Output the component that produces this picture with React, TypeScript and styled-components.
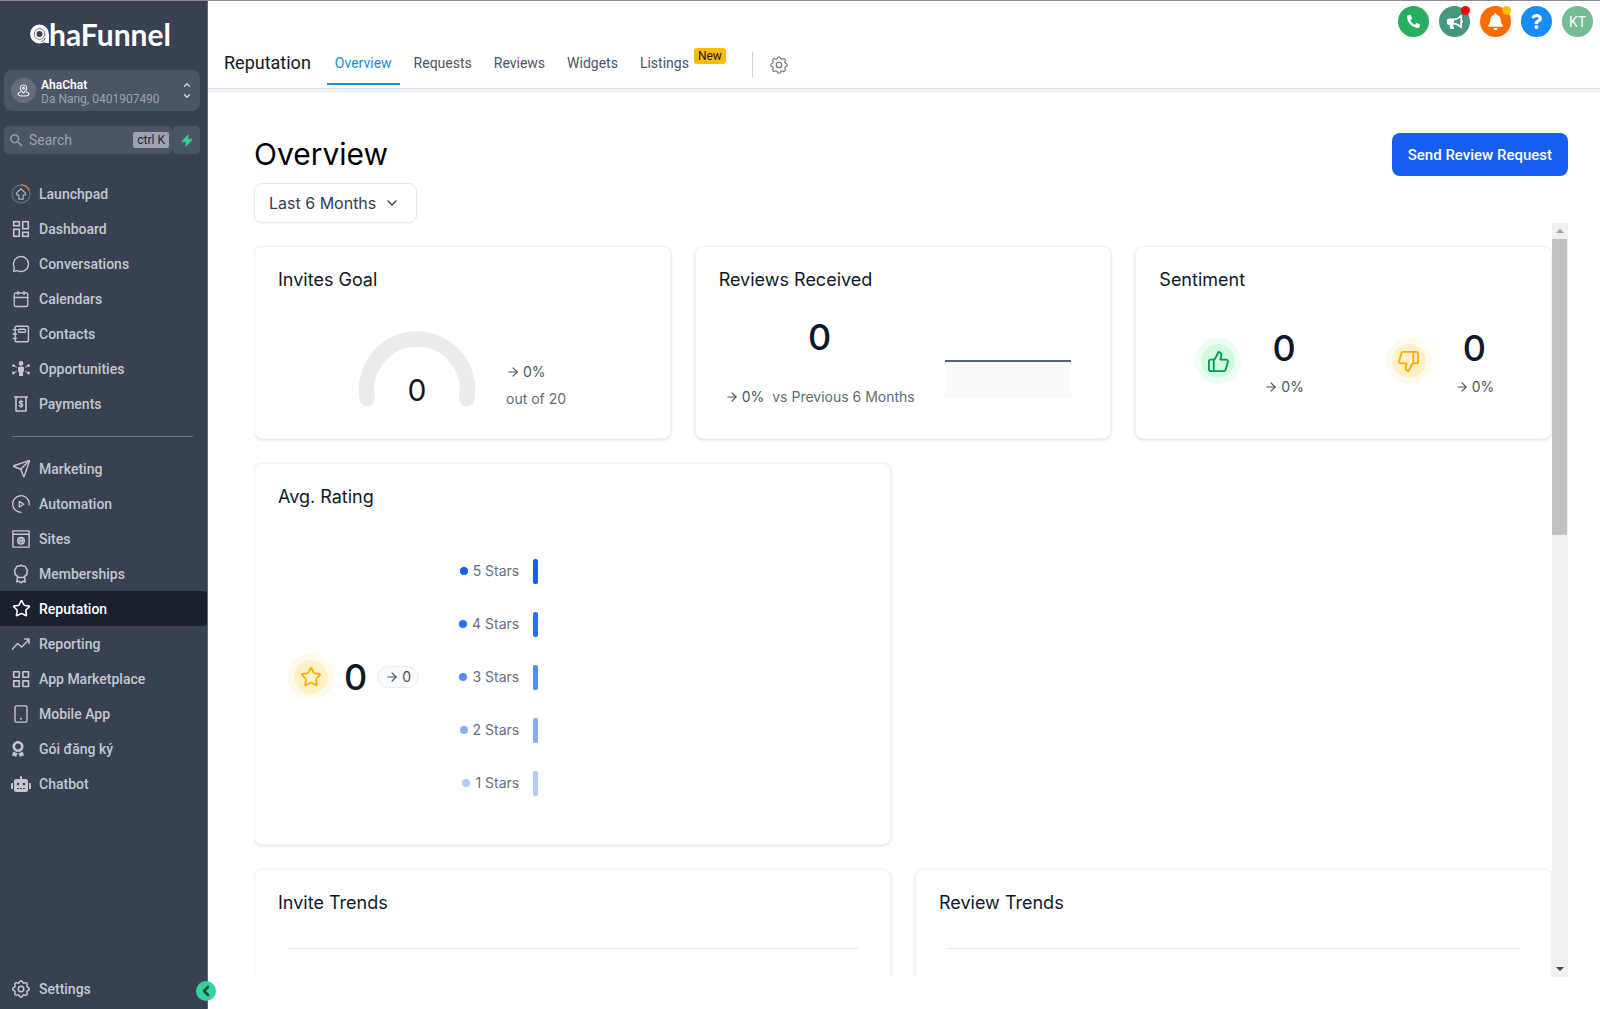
import React, { useRef } from "react";
import styled, { createGlobalStyle } from "styled-components";
import {
  ArrowRight,
  Calendar,
  ChevronDown,
  ChevronUp,
  ChevronLeft,
  MessageCircle,
  Send,
  Star,
  ThumbsDown,
  ThumbsUp,
} from "lucide-react";
import { FaAward, FaBell, FaBullhorn, FaPhoneAlt, FaQuestion, FaRobot } from "react-icons/fa";
import { HiOutlineCog } from "react-icons/hi";
import { MdSearch } from "react-icons/md";

const roboto = `Roboto, "Liberation Sans", sans-serif`;
const inter = `Inter, "Liberation Sans", sans-serif`;

const GlobalStyle = createGlobalStyle`
  *, *::before, *::after { box-sizing: border-box; }
  body { margin: 0; background: #fff; font-family: ${roboto}; }
  button, input, select { font: inherit; color: inherit; }
  h1, h2, p, ul, dl, dd, dt { margin: 0; padding: 0; font-weight: 400; }
  svg { display: block; flex: none; }
`;

const Shell = styled.div`
  display: flex;
  height: 100vh;
  border-top: 1px solid #8a8c90;
`;

/* ---------- sidebar ---------- */

const Sidebar = styled.aside`
  position: relative;
  display: flex;
  flex-direction: column;
  flex: none;
  width: 208px;
  background: #374151;
  border-right: 1px solid #5d6a7d;
  color: #c4c8ce;
`;

const Brand = styled.a`
  display: flex;
  align-items: center;
  height: 65px;
  margin-bottom: 4px;
  padding-left: 30px;
  color: #fff;
  text-decoration: none;
  font: 700 30px/32px Lato, ${roboto};
`;

const Account = styled.button`
  display: flex;
  align-items: center;
  gap: 5px;
  height: 41px;
  margin: 0 7px 0 4px;
  padding: 0 8px 0 7px;
  border: 0;
  border-radius: 8px;
  background: #4b5563;
  text-align: left;
`;

const AccountAvatar = styled.span`
  display: grid;
  place-items: center;
  width: 25px;
  height: 25px;
  border-radius: 50%;
  background: #656d7a;
  color: #e5e7eb;
`;

const AccountText = styled.span`
  flex: 1;
  display: flex;
  flex-direction: column;
  padding-top: 2px;
  font-size: 12px;
  line-height: 14px;
  color: #9da4ae;
`;

const AccountName = styled.strong`
  font-weight: 600;
  color: #fff;
`;

const Sorter = styled.span`
  display: flex;
  flex-direction: column;
  gap: 1px;
  color: #d1d5db;
`;

const SearchRow = styled.div`
  display: flex;
  margin: 15px 7px 0 4px;
`;

const SearchBox = styled.label`
  flex: 1;
  display: flex;
  align-items: center;
  gap: 4px;
  min-width: 0;
  height: 28px;
  padding: 0 3px 0 4px;
  border-radius: 5px;
  background: #4b5563;
  color: #9ca3af;
`;

const SearchInput = styled.input`
  flex: 1;
  min-width: 0;
  padding: 0;
  border: 0;
  outline: 0;
  background: transparent;
  font-size: 14px;
  line-height: 20px;
  &::placeholder {
    color: #9ca3af;
    opacity: 1;
  }
`;

const Shortcut = styled.kbd`
  padding: 0 4px;
  border-radius: 2px;
  background: #9ca3af;
  color: #1f2937;
  font: 400 12px/16px ${roboto};
`;

const QuickButton = styled.button`
  display: grid;
  place-items: center;
  width: 28px;
  height: 28px;
  padding: 0;
  border: 0;
  border-left: 1px solid #434d5c;
  border-radius: 5px;
  background: #4b5563;
  color: #34d399;
`;

const Nav = styled.nav`
  flex: 1;
  display: flex;
  flex-direction: column;
  padding-top: 22px;
`;

const Divider = styled.hr`
  width: calc(100% - 26px);
  margin: 15px 0 14px 12px;
  border: 0;
  border-top: 1px solid #6f7987;
`;

const NavLink = styled.a<{ $active?: boolean }>`
  display: flex;
  align-items: center;
  gap: 9px;
  height: 35px;
  padding-left: 12px;
  border-radius: 0 4px 4px 0;
  background: ${(p) => (p.$active ? "#1a202c" : "transparent")};
  color: ${(p) => (p.$active ? "#fff" : "#c4c8ce")};
  font-weight: 500;
  font-size: 14px;
  line-height: 20px;
  text-decoration: none;
`;

const NavIcon = styled.span<{ $narrow?: boolean }>`
  display: flex;
  align-items: center;
  justify-content: ${(p) => (p.$narrow ? "flex-start" : "center")};
  width: 18px;
  height: 20px;
  & > svg {
    ${(p) => (p.$narrow ? "width: 12px;" : "")}
  }
`;

const SidebarFoot = styled.div`
  padding-bottom: 3px;
`;

const Collapse = styled.button`
  position: absolute;
  right: -9px;
  bottom: 8px;
  display: grid;
  place-items: center;
  width: 20px;
  height: 20px;
  padding: 0;
  border: 0;
  border-radius: 50%;
  background: #34d399;
  color: #14532d;
`;

/* ---------- header ---------- */

const Page = styled.div`
  flex: 1;
  min-width: 0;
  display: flex;
  flex-direction: column;
`;

const Header = styled.header`
  display: flex;
  justify-content: space-between;
  height: 88px;
  flex: none;
  padding: 0 7px 0 16px;
  border-bottom: 1px solid #d9dfe4;
  box-shadow: 0 4px 0 #f0f4f8;
`;

const TabBar = styled.div`
  display: flex;
  align-self: flex-end;
  align-items: center;
  height: 47px;
`;

const Section = styled.p`
  margin-right: 16px;
  padding-bottom: 4px;
  font-size: 18px;
  line-height: 24px;
  color: #111827;
`;

const Tabs = styled.nav`
  display: flex;
  gap: 6px;
  height: 47px;
`;

const Tab = styled.a<{ $active?: boolean }>`
  display: flex;
  align-items: center;
  gap: 5px;
  height: 44px;
  padding: 2px 8px 0;
  border-bottom: 2px solid ${(p) => (p.$active ? "#158fd6" : "transparent")};
  color: ${(p) => (p.$active ? "#158fd6" : "#4b5563")};
  font-weight: 400;
  font-size: 14px;
  line-height: 20px;
  text-decoration: none;
`;

const NewBadge = styled.span`
  align-self: flex-start;
  margin-top: 5px;
  padding: 0 4px;
  border-radius: 3px;
  background: #fbbc04;
  color: #111827;
  font-size: 12px;
  line-height: 16px;
`;

const TabRule = styled.span`
  width: 1px;
  height: 26px;
  margin: 0 15px 0 18px;
  background: #cfd3d8;
`;

const IconButton = styled.button`
  padding: 0;
  border: 0;
  background: none;
  color: #6b7280;
`;

const Actions = styled.div`
  display: flex;
  gap: 10px;
  padding-top: 5px;
`;

const Round = styled.button<{ $bg: string }>`
  position: relative;
  display: grid;
  place-items: center;
  width: 31px;
  height: 31px;
  padding: 0;
  border: 0;
  border-radius: 50%;
  background: ${(p) => p.$bg};
  color: #fff;
  font-size: 14px;
`;

const Dot = styled.span<{ $color: string }>`
  position: absolute;
  top: 0;
  right: 0;
  width: 9px;
  height: 9px;
  border-radius: 50%;
  background: ${(p) => p.$color};
`;

/* ---------- overview ---------- */

const Main = styled.main`
  flex: 1;
  min-height: 0;
  display: flex;
  flex-direction: column;
  padding: 44px 32px 32px 46px;
  font-family: ${inter};
`;

const TitleRow = styled.div`
  display: flex;
  align-items: center;
  justify-content: space-between;
  height: 43px;
`;

const Title = styled.h1`
  padding-bottom: 2px;
  font-size: 30px;
  line-height: 38px;
  color: #000;
`;

const Primary = styled.button`
  height: 43px;
  padding: 0 16px;
  border: 0;
  border-radius: 8px;
  background: #155eef;
  color: #fff;
  font: 500 15px/24px ${roboto};
`;

const RangePicker = styled.label`
  display: grid;
  grid-template-columns: 1fr 42px;
  align-items: center;
  align-self: flex-start;
  width: 163px;
  height: 40px;
  margin-top: 7px;
  border: 1px solid #e6e8ee;
  border-radius: 8px;
  box-shadow: 0 1px 2px rgba(16, 24, 40, 0.05);
  color: #344054;
  & > * {
    grid-row: 1;
  }
  & > svg {
    grid-column: 2;
    justify-self: center;
    margin-right: 6px;
    pointer-events: none;
  }
`;

const RangeSelect = styled.select`
  grid-column: 1 / 3;
  width: 100%;
  height: 100%;
  padding: 0 0 0 14px;
  border: 0;
  outline: 0;
  appearance: none;
  background: transparent;
  font-size: 16px;
  line-height: 24px;
`;

const ScrollArea = styled.div`
  flex: 1;
  min-height: 0;
  display: flex;
`;

const Board = styled.div`
  flex: 1;
  min-width: 0;
  overflow: auto;
  scrollbar-width: none;
  padding-top: 23px;
  display: flex;
  flex-direction: column;
  gap: 24px;
`;

const Row = styled.div<{ $cols: number }>`
  display: grid;
  grid-template-columns: repeat(${(p) => p.$cols}, 1fr);
  gap: 24px;
  flex: none;
`;

const Card = styled.section<{ $h: number }>`
  display: flex;
  flex-direction: column;
  min-height: ${(p) => p.$h}px;
  padding: 19px 23px;
  border: 1px solid #f2f3f5;
  border-radius: 8px;
  box-shadow: 0 1px 3px rgba(16, 24, 40, 0.14);
  background: #fff;
`;

const CardTitle = styled.h2`
  font-size: 18px;
  line-height: 28px;
  color: #101828;
`;

const GoalBody = styled.div`
  display: flex;
  align-items: center;
  gap: 30px;
  padding: 37px 0 0 80px;
`;

const Gauge = styled.div`
  display: grid;
  justify-items: center;
  & > * {
    grid-area: 1 / 1;
  }
`;

const GaugeValue = styled.span`
  align-self: end;
  font-size: 30px;
  line-height: 38px;
  color: #101828;
`;

const GoalText = styled.div`
  display: flex;
  flex-direction: column;
  gap: 7px;
  padding-top: 30px;
`;

const Muted = styled.span`
  font-size: 14px;
  line-height: 20px;
  white-space: nowrap;
  color: #5b6c7d;
`;

const DeltaText = styled(Muted)`
  display: inline-flex;
  align-items: center;
  gap: 3px;
  color: #475467;
`;

const ReceivedBody = styled.div`
  display: flex;
  align-items: flex-end;
  gap: 30px;
  padding: 21px 0 0 6px;
`;

const ReceivedStats = styled.div`
  display: flex;
  flex-direction: column;
  align-items: center;
  gap: 28px;
`;

const ReceivedNote = styled.div`
  display: flex;
  gap: 8px;
`;

const Big = styled.span`
  font-size: 36px;
  line-height: 44px;
  font-weight: 500;
  color: #101828;
`;

const Sparkline = styled.svg`
  width: 126px;
  height: 38px;
  margin-bottom: 9px;
`;

const SentimentBody = styled.div`
  display: grid;
  grid-template-columns: 1fr 1fr;
  gap: 48px;
  padding: 44px 0 0 36px;
`;

const Mood = styled.div`
  display: flex;
  gap: 23px;
`;

const MoodStats = styled.div`
  display: flex;
  flex-direction: column;
  align-items: center;
  gap: 7px;
  margin-top: -12px;
`;

const Halo = styled.span<{ $tone: "green" | "amber" }>`
  display: grid;
  place-items: center;
  width: 46px;
  height: 46px;
  border: 6px solid ${(p) => (p.$tone === "green" ? "#ecfdf3" : "#fffaeb")};
  border-radius: 50%;
  background: ${(p) => (p.$tone === "green" ? "#d1fadf" : "#fef0c7")};
  background-clip: padding-box;
  color: ${(p) => (p.$tone === "green" ? "#039855" : "#ffab08")};
`;

const RatingBody = styled.div`
  flex: 1;
  display: flex;
  align-items: center;
  gap: 40px;
  padding: 28px 0 10px 10px;
`;

const RatingScore = styled.div`
  display: flex;
  align-items: center;
  gap: 10px;
`;

const Pill = styled(DeltaText)`
  padding: 0 7px;
  border: 1px solid #eaecf0;
  border-radius: 11px;
  background: #f9fafb;
`;

const StarList = styled.dl`
  display: flex;
  flex-direction: column;
  gap: 28px;
`;

const StarRow = styled.div`
  display: flex;
  align-items: center;
  justify-content: flex-end;
  gap: 14px;
  height: 25px;
`;

const StarLabel = styled.dt`
  display: flex;
  align-items: center;
  gap: 5px;
  font-size: 14px;
  line-height: 20px;
  color: #667085;
`;

const StarDot = styled.i<{ $color: string }>`
  width: 8px;
  height: 8px;
  border-radius: 50%;
  background: ${(p) => p.$color};
`;

const StarBar = styled.dd<{ $color: string }>`
  width: 5px;
  height: 25px;
  border-radius: 2px;
  background: ${(p) => p.$color};
`;

const TrendRule = styled.hr`
  width: calc(100% - 18px);
  margin: 31px 9px 0;
  border: 0;
  border-top: 1px solid #e5e7eb;
`;

const ScrollTrack = styled.div`
  display: flex;
  flex-direction: column;
  width: 16px;
  background: #f0f0f0;
`;

const ScrollArrow = styled.button<{ $dir: "up" | "down" }>`
  display: grid;
  place-items: center;
  height: 16px;
  padding: 0;
  border: 0;
  background: none;
  &::before {
    content: "";
    border: 4px solid transparent;
    border-top-width: ${(p) => (p.$dir === "up" ? 0 : 4)}px;
    border-bottom-width: ${(p) => (p.$dir === "up" ? 4 : 0)}px;
    border-top-color: #404040;
    border-bottom-color: #a3a3a3;
  }
`;

const ScrollRail = styled.div`
  flex: 1;
`;

const ScrollThumb = styled.div`
  height: 41%;
  margin-right: 1px;
  background: #c1c1c1;
`;

/* ---------- drawings ---------- */

const line = {
  fill: "none",
  stroke: "currentColor",
  strokeWidth: 1.4,
  strokeLinecap: "round" as const,
  strokeLinejoin: "round" as const,
};

const BrandMark = () => (
  <svg width="19" height="20" viewBox="0 0 19 20" fill="none">
    <circle cx="9.500" cy="10" r="6.200" stroke="#fff" strokeWidth="6.400" />
    <path d="M14.500 10v9H19V10z" fill="#fff" />
    <circle cx="9.500" cy="10" r="5.300" stroke="#5d6878" strokeWidth="0.900" />
    <path d="M11.500 17.600c1.800-.7 3-1.900 3.700-3.700" stroke="#374151" strokeWidth="1" />
  </svg>
);

const PinIcon = () => (
  <svg width="13" height="13" viewBox="0 0 13 13" {...line} strokeWidth={1.2}>
    <path d="M6.500 9C4.600 7.300 3.300 5.900 3.300 4.200a3.200 3.200 0 0 1 6.400 0C9.700 5.900 8.400 7.300 6.500 9z" />
    <circle cx="6.500" cy="4.200" r="1" />
    <path d="M3.500 8.200C2 8.500 1 9.200 1 10c0 1.200 2.500 2 5.500 2s5.500-.8 5.500-2c0-.8-1-1.500-2.500-1.800" />
  </svg>
);

const BoltIcon = () => (
  <svg width="12" height="13" viewBox="0 0 12 13" fill="currentColor" stroke="currentColor" strokeWidth="0.800" strokeLinejoin="round">
    <path d="M7 .8.900 7.600h4.300L5 12.200l6.100-6.800H6.800z" />
  </svg>
);

const LaunchpadIcon = () => (
  <svg width="20" height="20" viewBox="0 0 20 20" fill="none">
    <circle cx="10" cy="10" r="9" stroke="#5d6878" strokeWidth="1.400" />
    <path d="M10 1a9 9 0 0 1 8.200 5.300" stroke="#c77b3c" strokeWidth="1.600" />
    <path d="M10 4.800 5.400 9.200v1.600h2.400v4.400h4.400v-4.400h2.400V9.200z" stroke="#a9afb8" strokeWidth="1.200" strokeLinejoin="round" />
  </svg>
);

const DashboardIcon = () => (
  <svg width="18" height="18" viewBox="0 0 18 18" {...line} strokeWidth={1.6} strokeLinejoin="miter">
    <rect x="1.700" y="1.700" width="5.600" height="4" />
    <rect x="10.700" y="1.700" width="5.600" height="7" />
    <rect x="1.700" y="9.300" width="5.600" height="7" />
    <rect x="10.700" y="12.300" width="5.600" height="4" />
  </svg>
);

const ContactsIcon = () => (
  <svg width="18" height="18" viewBox="0 0 18 18" {...line}>
    <rect x="3.200" y="1.200" width="13.200" height="15.600" rx="1" />
    <rect x="6.500" y="4.200" width="7" height="3" rx="1" />
    <path d="M1 4.600h3.600M1 9h3.600M1 13.400h3.600" />
  </svg>
);

const OpportunitiesIcon = () => (
  <svg width="20" height="18" viewBox="0 0 20 18" fill="currentColor">
    <circle cx="10" cy="3.400" r="2.300" />
    <path d="M7 7.800C7 6.800 7.900 6.400 10 6.400s3 .4 3 1.400v4h-1V16H8v-4.200H7z" />
    <circle cx="2.400" cy="5.600" r="1.400" />
    <circle cx="2.400" cy="13" r="1.400" />
    <circle cx="17.600" cy="5.600" r="1.400" />
    <circle cx="17.600" cy="13" r="1.400" />
    <path d="m2.400 5.600 3.400 1.800M2.400 13l3.400-1.800M17.600 5.600l-3.400 1.800M17.600 13l-3.400-1.800" stroke="currentColor" strokeWidth="1" />
  </svg>
);

const PaymentsIcon = () => (
  <svg width="16" height="18" viewBox="0 0 16 18" {...line} strokeWidth={1.6}>
    <path d="M1.500 2h13M3 2v14h10V2" />
    <path d="M9.700 6.700C9.300 6.200 8.700 6 8 6c-1 0-1.700.5-1.700 1.300C6.300 9 9.800 8.300 9.800 10c0 .9-.8 1.400-1.800 1.400-.8 0-1.500-.3-1.900-.9M8 5v7.500" strokeWidth="1.200" />
  </svg>
);

const AutomationIcon = () => (
  <svg width="18" height="18" viewBox="0 0 18 18" {...line} strokeWidth={1.3}>
    <path d="M9 17.300A8.300 8.300 0 1 1 17.200 8c.1.700 0 1.300-.2 2" />
    <path d="m7.300 6.400 4.400 2.800-4.400 2.800z" />
  </svg>
);

const SitesIcon = () => (
  <svg width="18" height="18" viewBox="0 0 18 18" {...line}>
    <path d="M.9.900h16.200v16.200H.9zM.9 4.200h16.200" />
    <circle cx="9" cy="10.800" r="3.300" />
    <path d="M9 7.500v6.600M5.700 10.800h6.600M7.600 8v5.600M10.400 8v5.600" strokeWidth="0.900" />
  </svg>
);

const MembershipsIcon = () => (
  <svg width="18" height="20" viewBox="0 0 18 20" {...line} strokeWidth={1.5}>
    <path d="m9 1.200 2 .9 2.200.2.900 2 1.400 1.800-.6 2.100.1 2.200-1.800 1.300-1.500 1.600-2.700.1-2.700-.1-1.500-1.600L3 10.400l.1-2.200-.6-2.100 1.400-1.800.9-2L7 2.100z" />
    <path d="M5.500 12.800 4.800 18l2.200-.8L9 18.800l2-1.600 2.200.8-.7-5.200" />
  </svg>
);

const ReportingIcon = () => (
  <svg width="20" height="14" viewBox="0 0 20 14" {...line}>
    <path d="m1.500 12 5-5.500 4.200 3.500L18 2.500M13.600 2H18v4.600" />
  </svg>
);

const MarketplaceIcon = () => (
  <svg width="18" height="18" viewBox="0 0 18 18" {...line} strokeWidth={1.6}>
    <rect x="1.700" y="1.700" width="5.600" height="5.600" />
    <rect x="10.900" y="1.700" width="5.600" height="5.600" />
    <rect x="1.700" y="10.900" width="5.600" height="5.600" />
    <rect x="10.900" y="10.900" width="5.600" height="5.600" />
  </svg>
);

const MobileIcon = () => (
  <svg width="14" height="18" viewBox="0 0 14 18" {...line}>
    <rect x="1" y="0.900" width="12" height="16.200" rx="1.500" />
    <path d="M7 13.600v.2" strokeWidth="1.900" />
  </svg>
);

/* ---------- data ---------- */

type NavItem = { label: string; icon: React.ReactNode; active?: boolean; narrow?: boolean };

const primaryNav: NavItem[] = [
  { label: "Launchpad", icon: <LaunchpadIcon /> },
  { label: "Dashboard", icon: <DashboardIcon /> },
  { label: "Conversations", icon: <MessageCircle size={18} strokeWidth={1.8} /> },
  { label: "Calendars", icon: <Calendar size={18} strokeWidth={1.8} /> },
  { label: "Contacts", icon: <ContactsIcon /> },
  { label: "Opportunities", icon: <OpportunitiesIcon /> },
  { label: "Payments", icon: <PaymentsIcon /> },
];

const secondaryNav: NavItem[] = [
  { label: "Marketing", icon: <Send size={19} strokeWidth={1.8} /> },
  { label: "Automation", icon: <AutomationIcon /> },
  { label: "Sites", icon: <SitesIcon /> },
  { label: "Memberships", icon: <MembershipsIcon /> },
  { label: "Reputation", icon: <Star size={19} strokeWidth={2} />, active: true },
  { label: "Reporting", icon: <ReportingIcon /> },
  { label: "App Marketplace", icon: <MarketplaceIcon /> },
  { label: "Mobile App", icon: <MobileIcon /> },
  { label: "Gói đăng ký", icon: <FaAward size={16} />, narrow: true },
  { label: "Chatbot", icon: <FaRobot size={20} /> },
];

const starRows = [
  { stars: 5, color: "#155eef" },
  { stars: 4, color: "#2970ff" },
  { stars: 3, color: "#528bff" },
  { stars: 2, color: "#84adff" },
  { stars: 1, color: "#b2ccff" },
];

const NavEntry = ({ item }: { item: NavItem }) => (
  <NavLink href="#" $active={item.active} aria-current={item.active ? "page" : undefined}>
    <NavIcon $narrow={item.narrow}>{item.icon}</NavIcon>
    {item.label}
  </NavLink>
);

const Arrow = () => <ArrowRight size={14} strokeWidth={2} />;

const Delta = ({ value }: { value: string }) => (
  <DeltaText>
    <Arrow />
    {value}
  </DeltaText>
);

export default function App() {
  const board = useRef<HTMLDivElement>(null);
  const scroll = (top: number) => board.current?.scrollBy({ top });

  return (
    <>
      <GlobalStyle />
      <Shell>
        <Sidebar>
          <Brand href="#" aria-label="ahaFunnel">
            <BrandMark />
            haFunnel
          </Brand>
          <Account type="button">
            <AccountAvatar>
              <PinIcon />
            </AccountAvatar>
            <AccountText>
              <AccountName>AhaChat</AccountName>
              Da Nang, 0401907490
            </AccountText>
            <Sorter>
              <ChevronUp size={10} strokeWidth={3.4} />
              <ChevronDown size={10} strokeWidth={3.4} />
            </Sorter>
          </Account>
          <SearchRow>
            <SearchBox>
              <MdSearch size={17} />
              <SearchInput type="text" placeholder="Search" aria-label="Search" />
              <Shortcut>ctrl K</Shortcut>
            </SearchBox>
            <QuickButton type="button" aria-label="Quick actions">
              <BoltIcon />
            </QuickButton>
          </SearchRow>
          <Nav>
            {primaryNav.map((item) => (
              <NavEntry key={item.label} item={item} />
            ))}
            <Divider />
            {secondaryNav.map((item) => (
              <NavEntry key={item.label} item={item} />
            ))}
          </Nav>
          <SidebarFoot>
            <NavEntry item={{ label: "Settings", icon: <HiOutlineCog size={22} strokeWidth={1.6} /> }} />
          </SidebarFoot>
          <Collapse type="button" aria-label="Collapse sidebar">
            <ChevronLeft size={16} strokeWidth={4} />
          </Collapse>
        </Sidebar>

        <Page>
          <Header>
            <TabBar>
              <Section>Reputation</Section>
              <Tabs>
                <Tab href="#" $active>Overview</Tab>
                <Tab href="#">Requests</Tab>
                <Tab href="#">Reviews</Tab>
                <Tab href="#">Widgets</Tab>
                <Tab href="#">
                  Listings <NewBadge>New</NewBadge>
                </Tab>
              </Tabs>
              <TabRule />
              <IconButton type="button" aria-label="Reputation settings">
                <HiOutlineCog size={22} strokeWidth={1.3} />
              </IconButton>
            </TabBar>
            <Actions>
              <Round type="button" aria-label="Call" $bg="#27ae60"><FaPhoneAlt size={13} /></Round>
              <Round type="button" aria-label="Announcements" $bg="#47967f">
                <FaBullhorn size={16} />
                <Dot $color="#ff0000" />
              </Round>
              <Round type="button" aria-label="Notifications" $bg="#ff6a00">
                <FaBell size={17} />
                <Dot $color="#ffbc00" />
              </Round>
              <Round type="button" aria-label="Help" $bg="#188bf6"><FaQuestion size={15} /></Round>
              <Round type="button" aria-label="Profile" $bg="#75bb93">KT</Round>
            </Actions>
          </Header>

          <Main>
            <TitleRow>
              <Title>Overview</Title>
              <Primary type="button">Send Review Request</Primary>
            </TitleRow>
            <RangePicker>
              <RangeSelect aria-label="Date range" defaultValue="6">
                <option value="6">Last 6 Months</option>
              </RangeSelect>
              <ChevronDown size={16} strokeWidth={2} />
            </RangePicker>

            <ScrollArea>
              <Board ref={board}>
                <Row $cols={3}>
                  <Card $h={193}>
                    <CardTitle>Invites Goal</CardTitle>
                    <GoalBody>
                      <Gauge>
                        <svg width="118" height="78" viewBox="0 0 118 78" fill="none">
                          <path d="M9.300 67.500A50.500 50.500 0 1 1 108.700 67.500" stroke="#ebebeb" strokeWidth="15.500" strokeLinecap="round" />
                        </svg>
                        <GaugeValue>0</GaugeValue>
                      </Gauge>
                      <GoalText>
                        <Delta value="0%" />
                        <Muted>out of 20</Muted>
                      </GoalText>
                    </GoalBody>
                  </Card>
                  <Card $h={193}>
                    <CardTitle>Reviews Received</CardTitle>
                    <ReceivedBody>
                      <ReceivedStats>
                        <Big>0</Big>
                        <ReceivedNote>
                          <Delta value="0%" />
                          <Muted>vs Previous 6 Months</Muted>
                        </ReceivedNote>
                      </ReceivedStats>
                      <Sparkline viewBox="0 0 126 38">
                        <rect width="126" height="38" fill="#f9fafb" />
                        <rect width="126" height="2" fill="#56627a" />
                      </Sparkline>
                    </ReceivedBody>
                  </Card>
                  <Card $h={193}>
                    <CardTitle>Sentiment</CardTitle>
                    <SentimentBody>
                      <Mood>
                        <Halo $tone="green"><ThumbsUp size={23} strokeWidth={1.9} /></Halo>
                        <MoodStats>
                          <Big>0</Big>
                          <Delta value="0%" />
                        </MoodStats>
                      </Mood>
                      <Mood>
                        <Halo $tone="amber"><ThumbsDown size={23} strokeWidth={1.9} /></Halo>
                        <MoodStats>
                          <Big>0</Big>
                          <Delta value="0%" />
                        </MoodStats>
                      </Mood>
                    </SentimentBody>
                  </Card>
                </Row>

                <Row $cols={2}>
                  <Card $h={382}>
                    <CardTitle>Avg. Rating</CardTitle>
                    <RatingBody>
                      <RatingScore>
                        <Halo $tone="amber"><Star size={22} strokeWidth={1.9} /></Halo>
                        <Big>0</Big>
                        <Pill>
                          <Arrow />0
                        </Pill>
                      </RatingScore>
                      <StarList>
                        {starRows.map((row) => (
                          <StarRow key={row.stars}>
                            <StarLabel>
                              <StarDot $color={row.color} />
                              {row.stars} Stars
                            </StarLabel>
                            <StarBar $color={row.color} aria-label="0 reviews" />
                          </StarRow>
                        ))}
                      </StarList>
                    </RatingBody>
                  </Card>
                </Row>

                <Row $cols={2}>
                  <Card $h={382}>
                    <CardTitle>Invite Trends</CardTitle>
                    <TrendRule />
                  </Card>
                  <Card $h={382}>
                    <CardTitle>Review Trends</CardTitle>
                    <TrendRule />
                  </Card>
                </Row>
              </Board>
              <ScrollTrack>
                <ScrollArrow type="button" $dir="up" aria-label="Scroll up" onClick={() => scroll(-80)} />
                <ScrollRail>
                  <ScrollThumb />
                </ScrollRail>
                <ScrollArrow type="button" $dir="down" aria-label="Scroll down" onClick={() => scroll(80)} />
              </ScrollTrack>
            </ScrollArea>
          </Main>
        </Page>
      </Shell>
    </>
  );
}
